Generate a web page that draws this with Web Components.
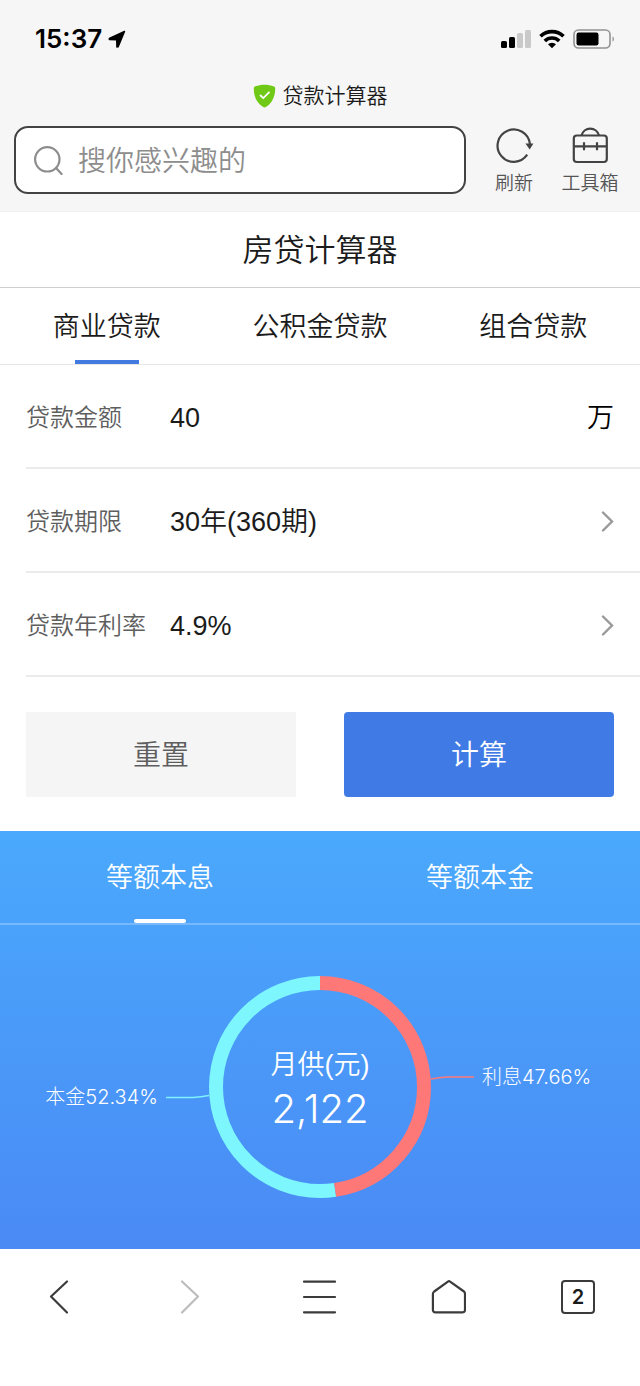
<!DOCTYPE html>
<html lang="zh-CN">
<head>
<meta charset="utf-8">
<meta name="viewport" content="width=device-width, initial-scale=1">
<title>贷款计算器</title>
<style>
  body {
    margin: 0;
    background: #fff;
    color: #1b1b1b;
    font-family: "Liberation Sans", "Noto Sans CJK SC", sans-serif;
    font-weight: 350;
  }
</style>
</head>
<body>
<loan-page></loan-page>

<script>
const base = `
  *, *::before, *::after { box-sizing: border-box; }
  button, input, select {
    margin: 0; padding: 0; border: 0; background: none; border-radius: 0;
    font: inherit; color: inherit; appearance: none; outline: none;
  }
  button, a { cursor: pointer; }
  svg { display: block; flex: none; }
`;

function define(name, markup, setup) {
  const template = document.createElement('template');
  template.innerHTML = markup;
  customElements.define(name, class extends HTMLElement {
    constructor() {
      super();
      this.attachShadow({ mode: 'open' }).append(template.content.cloneNode(true));
    }
    connectedCallback() {
      if (setup) setup.call(this, this.shadowRoot);
    }
  });
}

define('status-bar', `
  <style>${base}
    :host { display: flex; align-items: center; justify-content: space-between; height: 78px; padding: 0 24px 0 35px; color: #000; }
    div { display: flex; align-items: center; gap: 6px; }
    .system { gap: 8px; }
    time { font: 600 26px/32px Inter, sans-serif; }
  </style>
  <div>
    <time><slot></slot></time>
    <svg width="18" height="18" viewBox="0 0 18 18" aria-hidden="true"><path d="M16.500 1.500 1.300 8.300v1.200l7.400.2.200 7.300 1.200-.1Z" fill="#000" stroke="#000" stroke-width="1.400" stroke-linejoin="round"/></svg>
  </div>
  <div class="system">
    <svg width="30" height="20" viewBox="0 0 30 20" aria-label="信号">
      <rect x="0" y="12" width="6" height="7" rx="1.500"/><rect x="8" y="8" width="6" height="11" rx="1.500"/>
      <rect x="16" y="4" width="6" height="15" rx="1.500" fill="#c9c9c9"/><rect x="24" y="1" width="6" height="18" rx="1.500" fill="#c9c9c9"/>
    </svg>
    <svg width="26" height="20" viewBox="0 0 26 20" aria-label="无线网络">
      <g fill="none" stroke="#000" stroke-width="3.600"><path d="M1.500 7.300a16.500 16.500 0 0 1 23 0"/><path d="M5.800 12a10.300 10.300 0 0 1 14.400 0"/></g>
      <path d="M13 19.200 9 15.300a5.800 5.800 0 0 1 8 0Z"/>
    </svg>
    <svg width="43" height="20" viewBox="0 0 43 20" aria-label="电池">
      <rect x="1" y="1" width="36" height="18" rx="4.500" fill="none" stroke="#929292" stroke-width="1.600"/>
      <rect x="3.500" y="3.500" width="22" height="13" rx="2.200"/>
      <path d="M39.500 7.200a3.400 3.400 0 0 1 0 5.600Z" fill="#929292"/>
    </svg>
  </div>
`);

define('site-title', `
  <style>${base}
    :host { display: flex; align-items: center; justify-content: center; gap: 7px; height: 36px; font-size: 21px; line-height: 32px; }
  </style>
  <svg width="23" height="24" viewBox="0 0 23 24" aria-hidden="true">
    <path d="M11.500.8c3.200 0 6.600.6 9.500 1.800.8.300 1.200.8 1.200 1.600 0 7.800-2.700 14.800-9.400 18.800-.9.500-1.700.5-2.600 0C3.500 19 .8 12 .8 4.200.8 3.400 1.200 2.900 2 2.600 4.900 1.400 8.300.8 11.500.8Z" fill="#6fc916"/>
    <path d="m7 11 3.300 3.100 6.200-6.200" fill="none" stroke="#fff" stroke-width="1.800"/>
  </svg>
  <slot></slot>
`);

define('search-box', `
  <style>${base}
    :host { display: flex; align-items: center; gap: 14px; flex: 1; min-width: 0; height: 68px; padding: 0 18px; background: #fff; border: 2px solid #434343; border-radius: 14px; box-sizing: border-box; }
    input { flex: 1; min-width: 0; height: 44px; padding-top: 4px; font-size: 28px; line-height: 40px; }
    input::placeholder { color: #8d8d8d; opacity: 1; }
  </style>
  <svg width="30" height="30" viewBox="0 0 30 30" fill="none" stroke="#8d8d8d" stroke-width="2.200" stroke-linecap="round" aria-hidden="true"><circle cx="13.300" cy="14.300" r="12.200"/><path d="m22 23 5.600 6"/></svg>
  <input type="search" aria-label="搜索" placeholder="搜你感兴趣的">
`);

define('tool-button', `
  <style>${base}
    :host { display: block; width: 76px; }
    button { display: flex; flex-direction: column; align-items: center; gap: 4px; width: 100%; font-size: 19px; line-height: 28px; color: #555; }
  </style>
  <button type="button"><slot name="icon"></slot><span><slot></slot></span></button>
`);

define('browser-header', `
  <style>${base}
    :host { display: block; background: #f6f6f6; border-bottom: 1px solid #efefef; padding-bottom: 17px; }
    .row { display: flex; height: 68px; margin-top: 12px; padding: 0 12px 0 14px; }
    search-box { margin-right: 10px; }
  </style>
  <status-bar>15:37</status-bar>
  <site-title>贷款计算器</site-title>
  <div class="row">
    <search-box></search-box>
    <tool-button>
      <svg slot="icon" width="40" height="40" viewBox="0 0 40 40" aria-hidden="true"><path d="M33.200 28.700A16.200 16.200 0 1 1 35.900 18" fill="none" stroke="#434343" stroke-width="2.200"/><path d="M31.400 17.500h8L35.700 23.500Z" fill="#434343"/></svg>
      刷新
    </tool-button>
    <tool-button>
      <svg slot="icon" width="40" height="40" viewBox="0 0 40 40" fill="none" stroke="#434343" stroke-width="2.200" aria-hidden="true"><rect x="3.800" y="9.500" width="33" height="26.500" rx="3"/><path d="M11.500 9.500a9 9 0 0 1 17.500 0M4 20.300h33M14 16.300v8M27 16.300v8"/></svg>
      工具箱
    </tool-button>
  </div>
`);

define('page-heading', `
  <style>${base}
    :host { display: block; border-bottom: 1px solid #cfcfcf; }
    h1 { margin: 0; padding: 17px 0 14px; font-size: 31px; line-height: 44px; font-weight: inherit; text-align: center; }
  </style>
  <h1><slot></slot></h1>
`);

/* Equal-width tabs; the labels come from the "labels" attribute. */
define('tab-strip', `
  <style>${base}
    :host { display: flex; height: 77px; border-bottom: 1px solid #e6e6e6; --bar: #427ae0; --bar-width: 64px; --bar-radius: 0px; box-sizing: border-box; }
    :host([variant="light"]) { height: 94px; border-bottom: 2px solid #ffffff40; color: #fff; --bar: #fff; --bar-width: 52px; --bar-radius: 2px; }
    button { flex: 1; position: relative; padding-top: 2px; font-size: 27px; line-height: 40px; }
    button[aria-selected="true"]::after { content: ""; position: absolute; left: 0; right: 0; bottom: 0; margin: auto; width: var(--bar-width); height: 4px; border-radius: var(--bar-radius); background: var(--bar); }
  </style>
`, function (root) {
  this.setAttribute('role', 'tablist');
  if (root.querySelector('button')) return;
  this.getAttribute('labels').split(' ').forEach((label, i) => {
    const tab = document.createElement('button');
    tab.type = 'button';
    tab.setAttribute('role', 'tab');
    tab.setAttribute('aria-selected', String(i === 0));
    tab.textContent = label;
    tab.addEventListener('click', () => {
      root.querySelectorAll('button').forEach(b => b.setAttribute('aria-selected', String(b === tab)));
    });
    root.append(tab);
  });
});

const fieldStyle = `
  :host { display: flex; align-items: center; height: 104px; margin-left: 26px; padding: 3px 26px 0 0; border-bottom: 2px solid #ebebeb; box-sizing: border-box; }
  label { width: 144px; font-size: 24px; line-height: 36px; color: #5e5e5e; }
  input, select { flex: 1; min-width: 0; height: 40px; font-size: 27px; line-height: 40px; }
`;

define('amount-field', `
  <style>${base}${fieldStyle} span { font-size: 27px; line-height: 40px; color: #000; }</style>
  <label for="amount">贷款金额</label>
  <input id="amount" type="text" inputmode="decimal" value="40">
  <span>万</span>
`);

define('choice-field', `
  <style>${base}${fieldStyle}</style>
  <label for="choice"></label>
  <select id="choice"><option></option></select>
  <svg width="13" height="22" viewBox="0 0 13 22" fill="none" stroke="#999" stroke-width="2.400" stroke-linecap="round" aria-hidden="true"><path d="m2 1.500 9 9-9 9"/></svg>
`, function (root) {
  root.querySelector('label').textContent = this.getAttribute('label');
  root.querySelector('option').textContent = this.getAttribute('value');
});

define('form-actions', `
  <style>${base}
    :host { display: flex; gap: 48px; padding: 35px 26px 34px; }
    button { flex: 1; height: 85px; padding-top: 3px; font-size: 28px; line-height: 40px; background: #f5f5f5; color: #5e5e5e; }
    .primary { background: #407be5; color: #fff; border-radius: 4px; }
  </style>
  <button type="reset">重置</button>
  <button type="button" class="primary">计算</button>
`);

define('payment-chart', `
  <style>${base}
    :host { display: grid; grid-template-columns: 1fr 222px 1fr; padding: 51px 0; color: #fff; }
    .side { display: flex; align-items: center; gap: 8px; font-family: Inter, "Noto Sans CJK SC", sans-serif; font-weight: 300; font-size: 20px; line-height: 32px; white-space: nowrap; }
    .principal { justify-content: flex-end; padding-top: 20px; }
    .interest { padding-bottom: 20px; }
    .ring { display: grid; }
    .ring > * { grid-area: 1 / 1; }
    .total { align-self: center; text-align: center; }
    .total span { display: block; font-size: 27px; line-height: 44px; }
    .total strong { display: block; font: 300 40px/44px Inter, sans-serif; }
  </style>
  <div class="side principal">
    <span>本金52.34%</span>
    <svg width="43" height="8" viewBox="0 0 43 8" fill="none" stroke="#7df3fd" stroke-width="1.600" aria-hidden="true"><path d="M0 4.500h27Q35 3.800 43 2.500"/></svg>
  </div>
  <div class="ring">
    <svg width="222" height="222" viewBox="0 0 222 222" fill="none" stroke-width="14" aria-hidden="true">
      <circle cx="111" cy="111" r="104" stroke="#7df6fd" pathLength="100" stroke-dasharray="52.340 47.660" stroke-dashoffset="-47.660" transform="rotate(-90 111 111)"/>
      <circle cx="111" cy="111" r="104" stroke="#ff7878" pathLength="100" stroke-dasharray="47.660 52.340" transform="rotate(-90 111 111)"/>
    </svg>
    <div class="total"><span>月供(元)</span><strong>2,122</strong></div>
  </div>
  <div class="side interest">
    <svg width="43" height="8" viewBox="0 0 43 8" fill="none" stroke="#ff7878" stroke-width="1.600" aria-hidden="true"><path d="M0 6Q8 4.700 16 4h27"/></svg>
    <span>利息47.66%</span>
  </div>
`);

define('result-panel', `
  <style>${base}
    :host { display: block; background: linear-gradient(#4aa9fc, #4a8af5); }
  </style>
  <tab-strip variant="light" labels="等额本息 等额本金"></tab-strip>
  <payment-chart></payment-chart>
`);

define('browser-nav', `
  <style>${base}
    :host { display: block; background: #fff; }
    nav { display: flex; justify-content: space-between; padding: 30px 44px 71px 41px; }
    button { display: grid; place-items: center; width: 36px; height: 36px; color: #3b3b3b; }
    .pages { border: 2px solid #3b3b3b; border-radius: 4px; width: 34px; height: 34px; margin: 1px; font: 600 20px/24px Inter, sans-serif; color: #1b1b1b; }
    svg { fill: none; stroke: currentColor; stroke-width: 2.200; stroke-linecap: round; stroke-linejoin: round; }
    button:disabled { color: #bcbcbc; }
  </style>
  <nav aria-label="浏览器">
    <button type="button" aria-label="后退"><svg width="36" height="36" viewBox="0 0 36 36"><path d="M26 2.500 10 17.500 26 33.500"/></svg></button>
    <button type="button" aria-label="前进" disabled><svg width="36" height="36" viewBox="0 0 36 36"><path d="m11 2.500 16 15-16 16"/></svg></button>
    <button type="button" aria-label="菜单"><svg width="36" height="36" viewBox="0 0 36 36"><path d="M3 2.700h31M3 18h31M3 33.300h31"/></svg></button>
    <button type="button" aria-label="主页"><svg width="36" height="36" viewBox="0 0 36 36"><path d="M17.900 2.600a2 2 0 0 1 2.200 0L34 12.500q1 1 1 2.500v16a2.300 2.300 0 0 1-2.300 2.300H5.200A2.300 2.300 0 0 1 2.900 31V15q0-1.500 1.300-2.500Z"/></svg></button>
    <button type="button" class="pages" aria-label="标签页 2">2</button>
  </nav>
`);

define('loan-page', `
  <style>${base}
    :host { display: block; }
    form { margin: 0; }
  </style>
  <browser-header></browser-header>
  <main>
    <page-heading>房贷计算器</page-heading>
    <tab-strip labels="商业贷款 公积金贷款 组合贷款"></tab-strip>
    <form>
      <amount-field></amount-field>
      <choice-field label="贷款期限" value="30年(360期)"></choice-field>
      <choice-field label="贷款年利率" value="4.9%"></choice-field>
      <form-actions></form-actions>
    </form>
    <result-panel></result-panel>
  </main>
  <browser-nav></browser-nav>
`);
</script>
</body>
</html>
